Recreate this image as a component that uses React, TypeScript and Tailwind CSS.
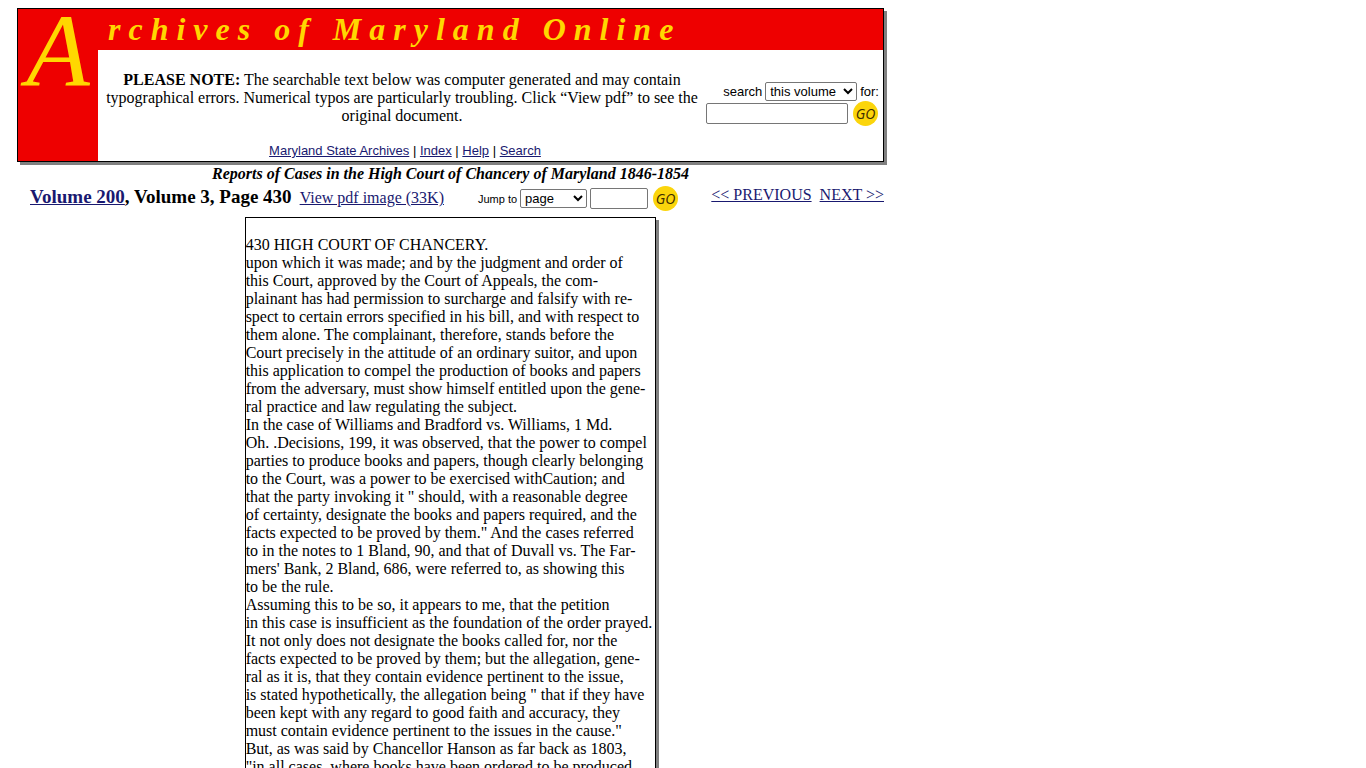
const navLinks = ["Maryland State Archives", "Index", "Help", "Search"]

const pageLines = [
  "430 HIGH COURT OF CHANCERY.",
  "upon which it was made; and by the judgment and order of",
  "this Court, approved by the Court of Appeals, the com-",
  "plainant has had permission to surcharge and falsify with re-",
  "spect to certain errors specified in his bill, and with respect to",
  "them alone. The complainant, therefore, stands before the",
  "Court precisely in the attitude of an ordinary suitor, and upon",
  "this application to compel the production of books and papers",
  "from the adversary, must show himself entitled upon the gene-",
  "ral practice and law regulating the subject.",
  "In the case of Williams and Bradford vs. Williams, 1 Md.",
  "Oh. .Decisions, 199, it was observed, that the power to compel",
  "parties to produce books and papers, though clearly belonging",
  "to the Court, was a power to be exercised withCaution; and",
  "that the party invoking it \" should, with a reasonable degree",
  "of certainty, designate the books and papers required, and the",
  "facts expected to be proved by them.\" And the cases referred",
  "to in the notes to 1 Bland, 90, and that of Duvall vs. The Far-",
  "mers' Bank, 2 Bland, 686, were referred to, as showing this",
  "to be the rule.",
  "Assuming this to be so, it appears to me, that the petition",
  "in this case is insufficient as the foundation of the order prayed.",
  "It not only does not designate the books called for, nor the",
  "facts expected to be proved by them; but the allegation, gene-",
  "ral as it is, that they contain evidence pertinent to the issue,",
  "is stated hypothetically, the allegation being \" that if they have",
  "been kept with any regard to good faith and accuracy, they",
  "must contain evidence pertinent to the issues in the cause.\"",
  "But, as was said by Chancellor Hanson as far back as 1803,",
  "\"in all cases, where books have been ordered to be produced",
]

function GoButton() {
  return (
    <button
      type="submit"
      className="flex size-[25px] shrink-0 items-center justify-center rounded-full bg-[#fbd50c] font-['Open_Sans',sans-serif] text-sm leading-none font-medium text-[#3a2a00] italic"
    >
      GO
    </button>
  )
}

function Header() {
  return (
    <header className="flex border border-black bg-white shadow-[3px_3px_0_#808080]">
      <div className="w-20 shrink-0 bg-[#ee0000] text-center text-[104px] leading-[84px] text-[#ffd700] italic">
        A
      </div>
      <div className="min-w-0 flex-1">
        <h1 className="h-[41px] bg-[#ee0000] pl-2.5 text-[32px] leading-[41px] font-bold tracking-[0.25em] whitespace-nowrap text-[#ffd700] italic">
          rchives of Maryland Online
        </h1>
        <div className="flex">
          <div className="flex-1 pt-[21px] text-center">
            <p className="px-1">
              <b>PLEASE NOTE:</b> The searchable text below was computer generated and may contain
              typographical errors. Numerical typos are particularly troubling. Click “View pdf” to
              see the original document.
            </p>
            <nav className="mt-[17px] mb-px pl-1.5 font-['Liberation_Sans',sans-serif] text-[13px] leading-[18px]">
              {navLinks.map((label, i) => (
                <span key={label}>
                  {i > 0 && " | "}
                  <a href="#" className="text-[#191970] underline">
                    {label}
                  </a>
                </span>
              ))}
            </nav>
          </div>
          <form className="shrink-0 pt-8 pr-1 font-['Liberation_Sans',sans-serif] text-[13px]">
            <div className="flex items-center justify-end gap-[3px]">
              <label htmlFor="scope">search</label>
              <select
                id="scope"
                className="h-[19px] w-[92px] rounded-[2px] border border-[#767676] bg-white"
              >
                <option>this volume</option>
                <option>all volumes</option>
              </select>
              <label htmlFor="query">for:</label>
            </div>
            <div className="flex items-center gap-[5px] pr-px">
              <input
                id="query"
                type="text"
                className="h-[21px] w-[142px] rounded-[2px] border border-[#767676] px-0.5"
              />
              <GoButton />
            </div>
          </form>
        </div>
      </div>
    </header>
  )
}

function PageBar() {
  return (
    <div className="flex items-start pl-[13px]">
      <p className="pt-1 text-[19px] leading-5 font-bold">
        <a href="#" className="text-[#191970] underline">
          Volume 200
        </a>
        , Volume 3, Page 430
      </p>
      <a href="#" className="ml-2 pt-1.5 text-[#191970] underline">
        View pdf image (33K)
      </a>
      <form className="ml-[34px] flex items-center gap-[3px] pt-[3px] font-['Liberation_Sans',sans-serif] text-[13px]">
        <label htmlFor="jump" className="text-[11px]">
          Jump to
        </label>
        <select
          id="jump"
          className="h-[19px] w-[67px] rounded-[2px] border border-[#767676] bg-white"
        >
          <option>page</option>
          <option>volume</option>
        </select>
        <input
          type="text"
          aria-label="Page number"
          className="mr-0.5 h-[21px] w-[58px] rounded-[2px] border border-[#767676] px-0.5"
        />
        <GoButton />
      </form>
      <div className="ml-auto flex gap-2 pt-[3px]">
        <a href="#" className="text-[#191970] underline">
          &lt;&lt; PREVIOUS
        </a>
        <a href="#" className="text-[#191970] underline">
          NEXT &gt;&gt;
        </a>
      </div>
    </div>
  )
}

export default function App() {
  return (
    <div className="min-h-screen bg-white pt-2 pl-[17px] font-['Liberation_Serif',serif] text-base leading-[18px] text-black">
      <div className="w-full max-w-[867px]">
        <Header />
        <h2 className="mt-[3px] text-center font-bold italic">
          Reports of Cases in the High Court of Chancery of Maryland 1846-1854
        </h2>
        <PageBar />
        <main className="mx-auto mt-1.5 w-fit border border-black pt-[18px] pr-[3px] pb-[18px] shadow-[3px_3px_0_#808080]">
          {pageLines.map((line) => (
            <p key={line} className="whitespace-nowrap">
              {line}
            </p>
          ))}
        </main>
      </div>
    </div>
  )
}
